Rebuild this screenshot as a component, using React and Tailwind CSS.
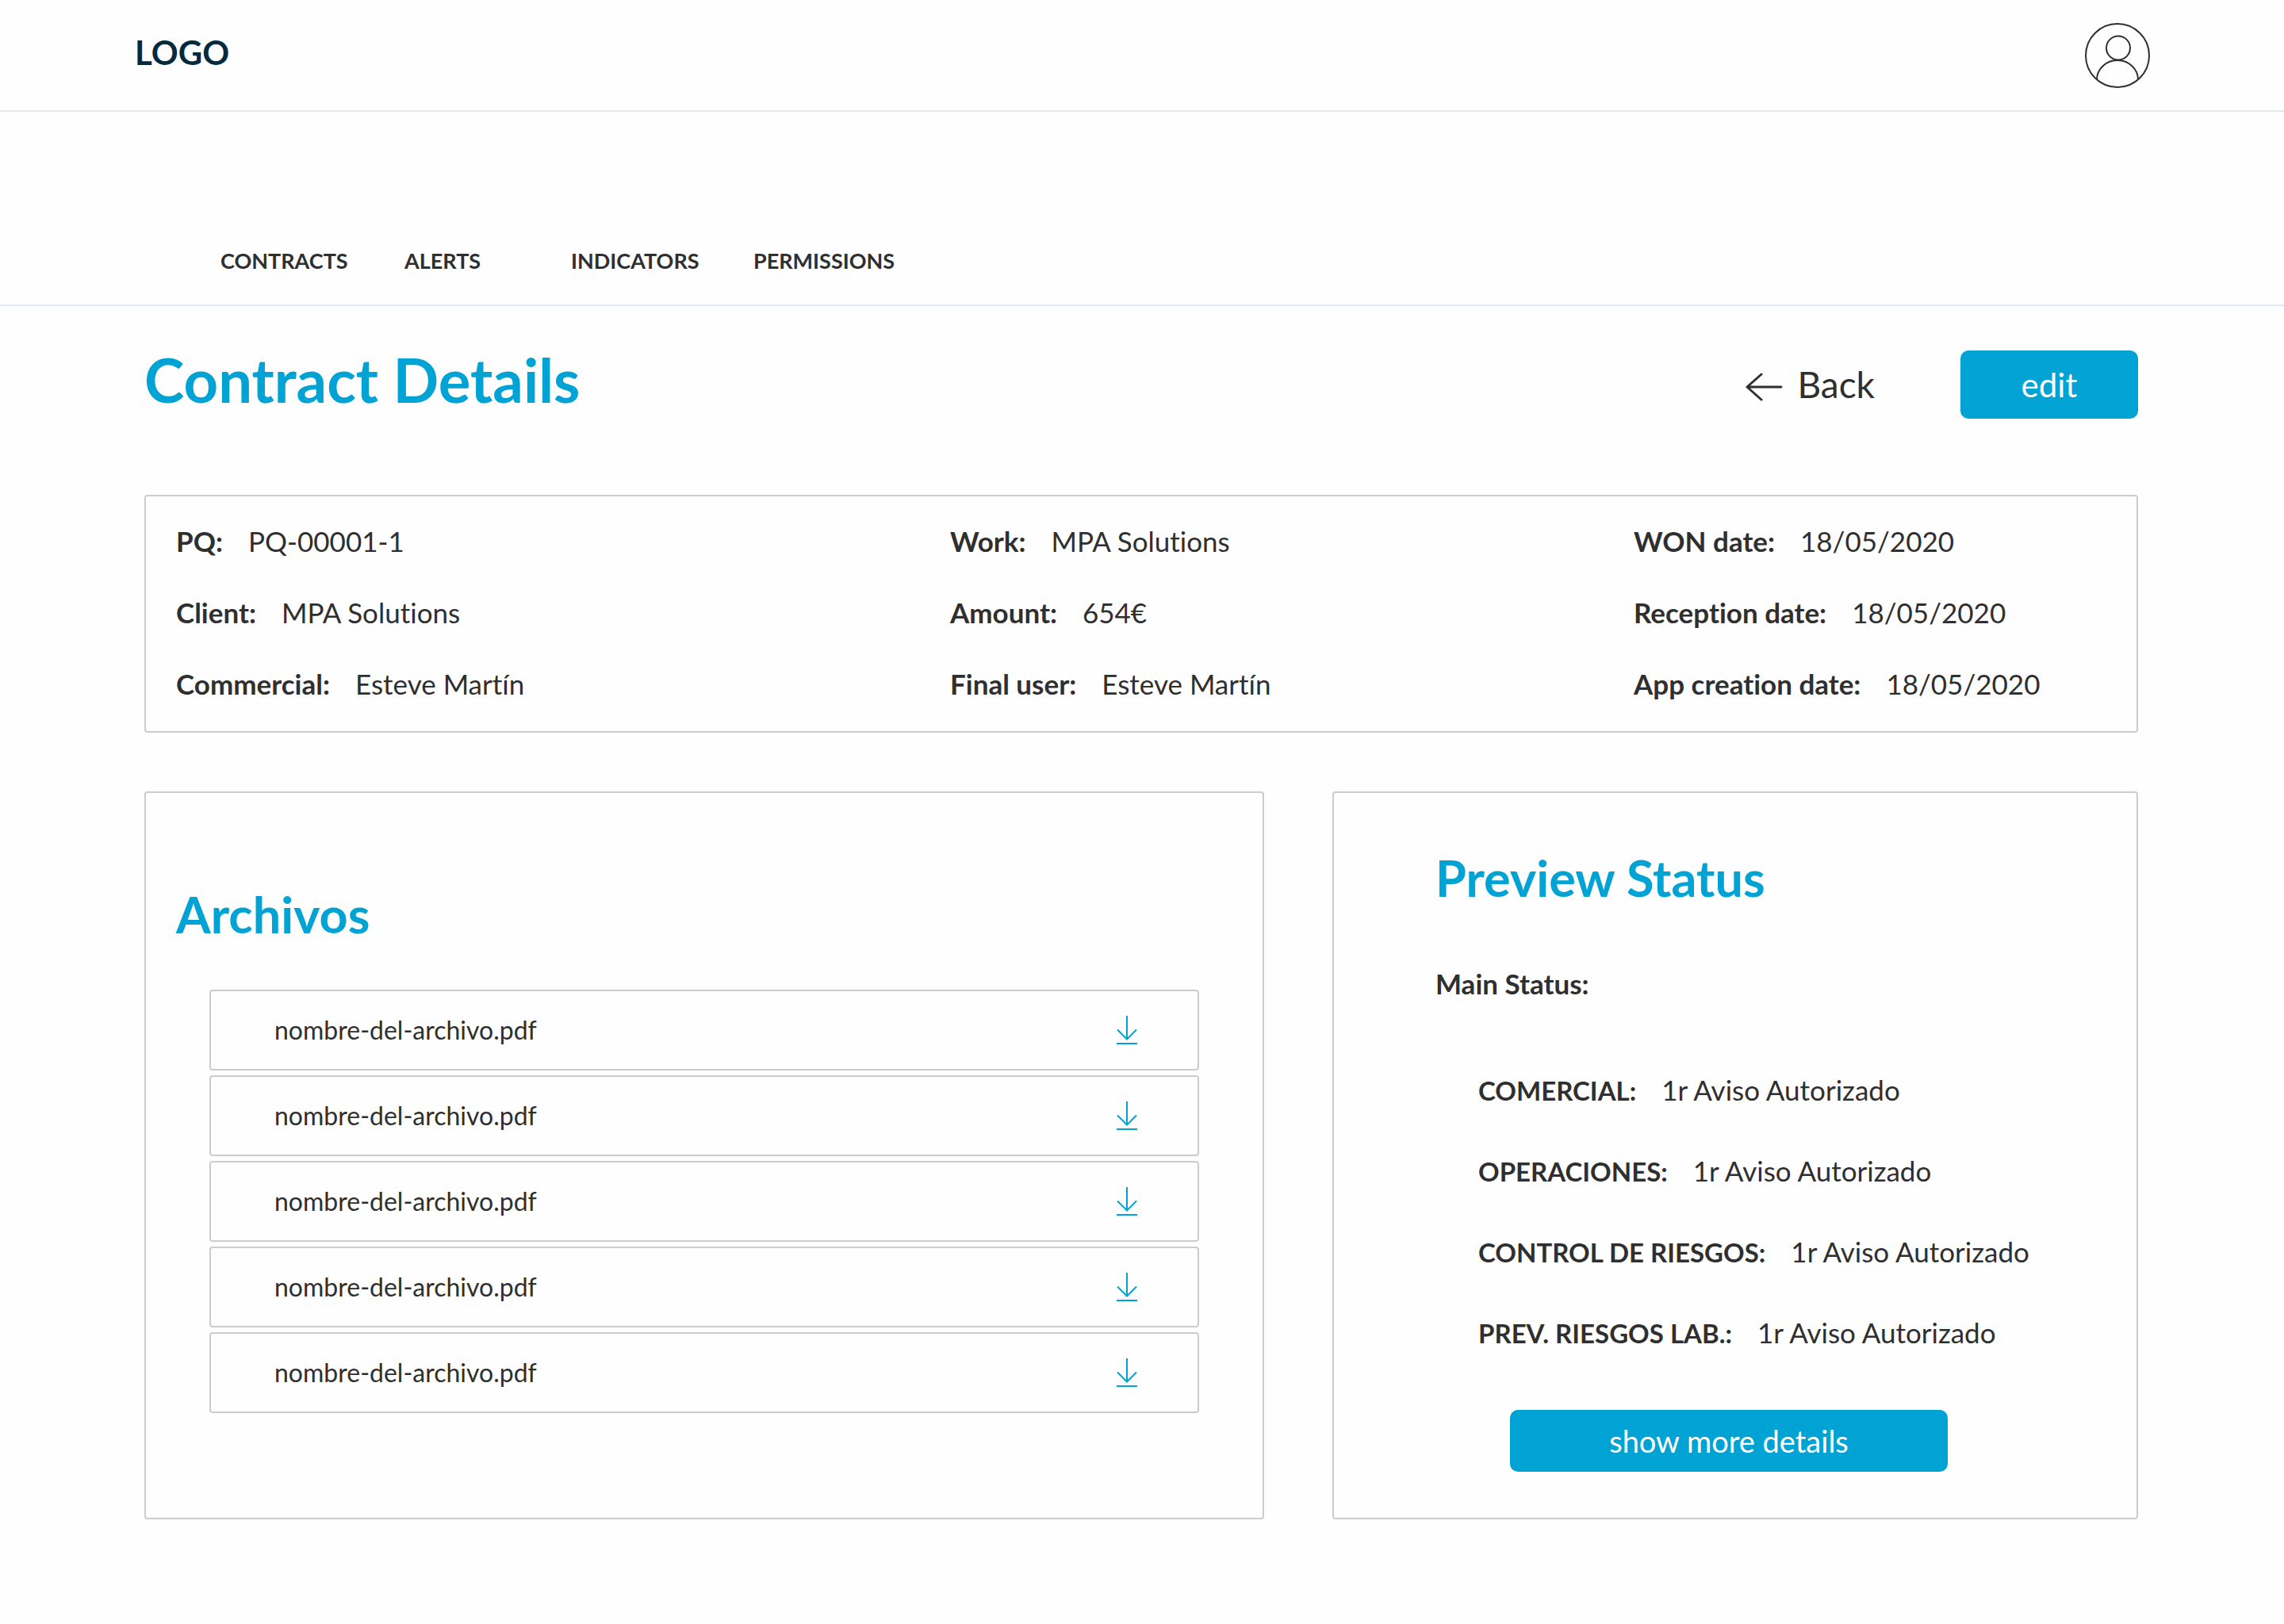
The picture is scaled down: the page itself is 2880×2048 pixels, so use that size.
const navItems = [
  { label: "CONTRACTS", width: "w-[232px]" },
  { label: "ALERTS", width: "w-[210px]" },
  { label: "INDICATORS", width: "w-[230px]" },
  { label: "PERMISSIONS", width: "" },
];

const details = [
  { label: "PQ:", value: "PQ-00001-1" },
  { label: "Work:", value: "MPA Solutions" },
  { label: "WON date:", value: "18/05/2020" },
  { label: "Client:", value: "MPA Solutions" },
  { label: "Amount:", value: "654€" },
  { label: "Reception date:", value: "18/05/2020" },
  { label: "Commercial:", value: "Esteve Martín" },
  { label: "Final user:", value: "Esteve Martín" },
  { label: "App creation date:", value: "18/05/2020" },
];

const files = [1, 2, 3, 4, 5].map((id) => ({ id, name: "nombre-del-archivo.pdf" }));

const statuses = [
  { label: "COMERCIAL:", value: "1r Aviso Autorizado" },
  { label: "OPERACIONES:", value: "1r Aviso Autorizado" },
  { label: "CONTROL DE RIESGOS:", value: "1r Aviso Autorizado" },
  { label: "PREV. RIESGOS LAB.:", value: "1r Aviso Autorizado" },
];

function AvatarIcon() {
  return (
    <svg width="84" height="84" viewBox="0 0 84 84" fill="none" stroke="currentColor" strokeWidth="2" aria-hidden="true">
      <circle cx="42" cy="42" r="40" />
      <circle cx="43" cy="32.5" r="15" />
      <path d="M16 72.5A26 24.5 0 0 1 68 72.5" />
    </svg>
  );
}

function BackIcon() {
  return (
    <svg width="48" height="36" viewBox="0 0 48 36" fill="none" stroke="currentColor" strokeWidth="3" strokeLinecap="round" strokeLinejoin="round" aria-hidden="true">
      <path d="M46 18H3M21 2L3 18L21 34" />
    </svg>
  );
}

function DownloadIcon() {
  return (
    <svg width="26" height="36" viewBox="0 0 26 36" fill="none" stroke="currentColor" strokeWidth="2" aria-hidden="true">
      <path d="M13 0V30M1 17.5L13 29.5L25 17.5M0 35H26" />
    </svg>
  );
}

function Field({ label, value, labelSize = "text-[35px]" }) {
  return (
    <div className="flex items-baseline gap-8 leading-10 whitespace-nowrap">
      <dt className={"font-bold leading-10 " + labelSize}>{label}</dt>
      <dd className="text-[35px] leading-10">{value}</dd>
    </div>
  );
}

export default function App() {
  return (
    <div className="min-h-screen bg-[#fefefe] pb-[132px] font-['Lato',sans-serif] text-[#2f2f2f] [font-variant-ligatures:none]">
      <header className="flex items-center justify-between border-b-2 border-[#e3e8f0] pt-7 pr-[168px] pb-[27px] pl-[170px]">
        <a href="#home" className="pb-2 text-[42px] leading-[48px] font-bold text-[#032b3f]">LOGO</a>
        <button type="button" aria-label="User profile">
          <AvatarIcon />
        </button>
      </header>

      <nav aria-label="Main" className="border-b-2 border-[#e3e8f0] pt-[172px] pb-[39px] pl-[278px]">
        <ul className="flex text-[27px] leading-8 font-bold">
          {navItems.map((item) => (
            <li key={item.label} className={item.width}>
              <a href={"#" + item.label.toLowerCase()}>{item.label}</a>
            </li>
          ))}
        </ul>
      </nav>

      <main className="pr-[184px] pl-[182px]">
        <div className="flex items-center justify-between pt-14">
          <h1 className="pb-3 text-[76px] leading-[74px] font-bold text-[#00a3d4]">Contract Details</h1>
          <div className="flex items-center gap-[108px]">
            <a href="#back" className="flex items-center gap-[18px] text-[46px] leading-[52px]">
              <span className="pt-1.5">
                <BackIcon />
              </span>
              Back
            </a>
            <button type="button" className="h-[86px] w-56 rounded-[10px] bg-[#00a3d4] text-[42px] leading-[52px] text-white">
              edit
            </button>
          </div>
        </div>

        <dl className="mt-24 grid grid-cols-[976fr_862fr_596fr] gap-y-[50px] rounded-sm border-2 border-[#cccccc] px-[38px] pt-9 pb-10">
          {details.map((item) => (
            <Field key={item.label} label={item.label} value={item.value} />
          ))}
        </dl>

        <div className="mt-[74px] grid grid-cols-[1412fr_1016fr] gap-[86px]">
          <section className="rounded-sm border-2 border-[#cccccc] pt-[117px] pr-20 pb-20 pl-[38px]">
            <h2 className="text-[63px] leading-[72px] font-bold text-[#00a3d4]">Archivos</h2>
            <ul className="mt-[59px] ml-[42px] flex flex-col gap-1.5">
              {files.map((file) => (
                <li key={file.id} className="flex h-[102px] items-center justify-between rounded-sm border-2 border-[#cccccc] pr-[76px] pl-20">
                  <span className="text-[32px] leading-10">{file.name}</span>
                  <button type="button" aria-label={"Download " + file.name} className="text-[#00a3d4]">
                    <DownloadIcon />
                  </button>
                </li>
              ))}
            </ul>
          </section>

          <section className="rounded-sm border-2 border-[#cccccc] pt-[71px] pb-[58px] pl-32">
            <h2 className="text-[63px] leading-[72px] font-bold text-[#00a3d4]">Preview Status</h2>
            <h3 className="mt-[77px] text-[35px] leading-10 font-bold">Main Status:</h3>
            <dl className="mt-[94px] ml-[54px] flex flex-col gap-[61px]">
              {statuses.map((item) => (
                <Field key={item.label} label={item.label} value={item.value} labelSize="text-[33px]" />
              ))}
            </dl>
            <button type="button" className="mt-[77px] ml-[94px] h-[78px] w-[552px] rounded-[10px] bg-[#00a3d4] text-[38px] leading-[48px] text-white">
              show more details
            </button>
          </section>
        </div>
      </main>
    </div>
  );
}
